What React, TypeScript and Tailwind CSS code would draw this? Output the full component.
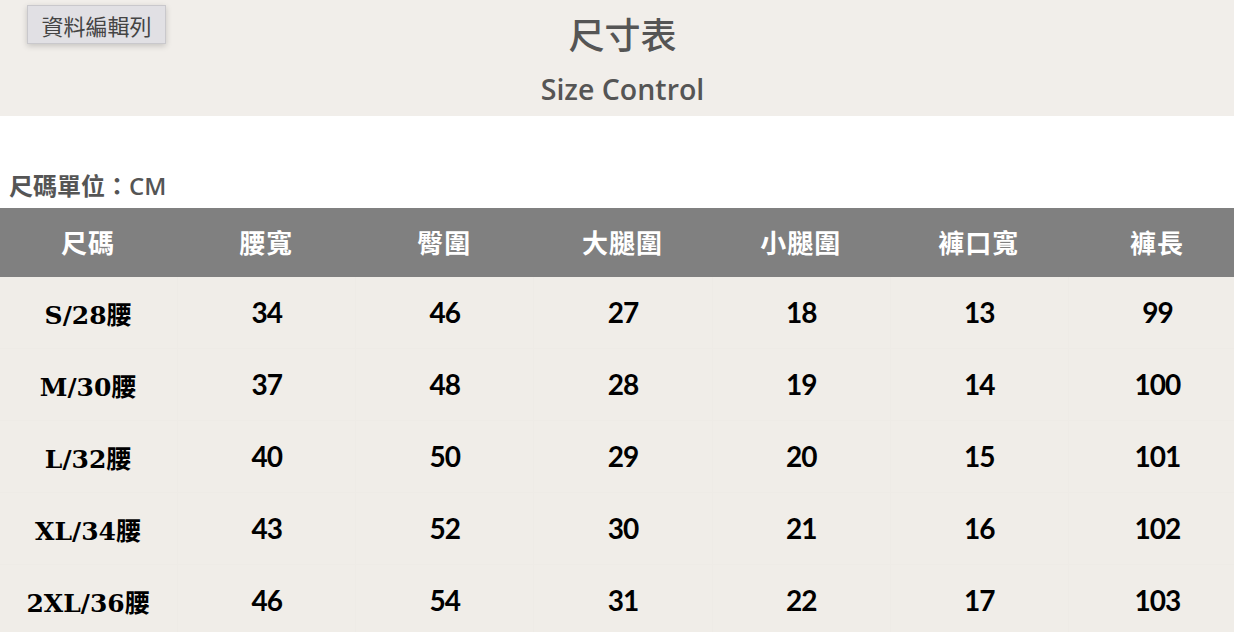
const headers = ["尺碼", "腰寬", "臀圍", "大腿圍", "小腿圍", "褲口寬", "褲長"];

const rows = [
  ["S/28腰", "34", "46", "27", "18", "13", "99"],
  ["M/30腰", "37", "48", "28", "19", "14", "100"],
  ["L/32腰", "40", "50", "29", "20", "15", "101"],
  ["XL/34腰", "43", "52", "30", "21", "16", "102"],
  ["2XL/36腰", "46", "54", "31", "22", "17", "103"],
];

export default function App() {
  return (
    <div className="w-[1234px] h-[632px] overflow-hidden bg-white font-['Open_Sans','Noto_Sans_CJK_TC',sans-serif]">
      <div className="ml-[-1px] w-[1247px]">
        <header className="relative h-[116px] bg-[#f1eeea] flex flex-col items-center">
          <button className="absolute left-[28px] top-[5px] h-[39px] w-[139px] bg-[#e1e0e4] border border-[#c9c8cc] shadow-[0_2px_6px_rgba(0,0,0,0.18)] text-[22px] text-[#444] font-['Noto_Sans_CJK_TC',sans-serif] leading-none">
            資料編輯列
          </button>
          <h1 className="mt-[10px] text-[36px] leading-[46px] font-medium text-[#555] font-['Noto_Sans_CJK_TC',sans-serif]">
            尺寸表
          </h1>
          <p className="mt-[15px] text-[28.5px] leading-[36px] font-semibold text-[#555]">Size Control</p>
        </header>

        <div className="h-[92px] flex items-end pb-[8px] pl-[10px]">
          <span className="text-[24px] font-semibold text-[#555] leading-[28px] font-['Open_Sans','Noto_Sans_CJK_TC',sans-serif]">
            尺碼單位：CM
          </span>
        </div>

        <div className="bg-[#f0ede8]">
          <div className="grid grid-cols-7 h-[69px] bg-[#808080]">
            {headers.map((h) => (
              <div
                key={h}
                className="flex items-center justify-center pb-[2px] text-white text-[26px] font-bold font-['Noto_Sans_CJK_TC',sans-serif] tracking-[1px]"
              >
                {h}
              </div>
            ))}
          </div>
          {rows.map((r) => (
            <div key={r[0]} className="grid grid-cols-7 h-[72px] border-b border-[#eeebe6]">
              {r.map((c, i) => (
                <div
                  key={i}
                  className={
                    i === 0
                      ? "flex items-center justify-center pt-[6px] text-black text-[25px] font-bold font-['DejaVu_Serif','Noto_Sans_CJK_TC',serif]"
                      : "flex items-center justify-center pb-[2px] text-black text-[28px] font-bold font-['Lato','Liberation_Sans',sans-serif] border-l border-[#eeebe6] tracking-[-1px]"
                  }
                >
                  {c}
                </div>
              ))}
            </div>
          ))}
        </div>
      </div>
    </div>
  );
}
